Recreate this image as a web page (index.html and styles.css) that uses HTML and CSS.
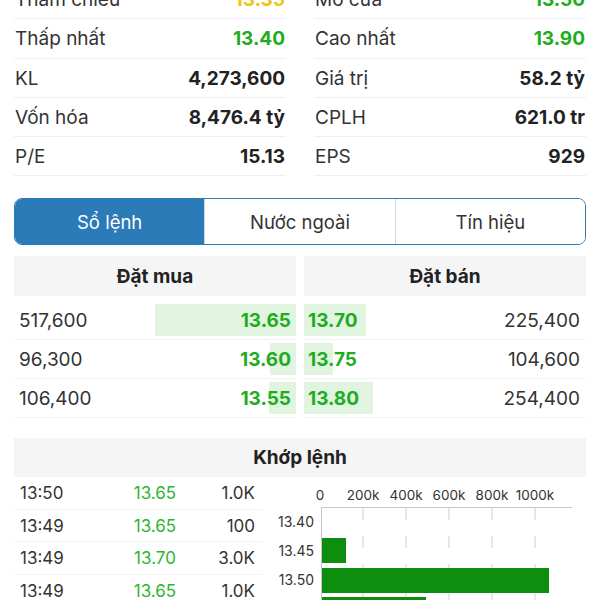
FILE: index.html
```html
<!DOCTYPE html>
<html lang="vi">
<head>
    <meta charset="UTF-8">
    <meta name="viewport" content="width=device-width, initial-scale=1.0">
    <title>Cổ phiếu</title>
    <link rel="stylesheet" href="styles.css">
</head>
<body>
    <div class="page">
        <div class="stats">
            <div class="stat"><span class="stat-label">Tham chiếu</span><span class="stat-value ref">13.35</span></div>
            <div class="stat"><span class="stat-label">Mở cửa</span><span class="stat-value up">13.50</span></div>
            <div class="stat"><span class="stat-label">Thấp nhất</span><span class="stat-value up">13.40</span></div>
            <div class="stat"><span class="stat-label">Cao nhất</span><span class="stat-value up">13.90</span></div>
            <div class="stat"><span class="stat-label">KL</span><span class="stat-value">4,273,600</span></div>
            <div class="stat"><span class="stat-label">Giá trị</span><span class="stat-value">58.2 tỷ</span></div>
            <div class="stat"><span class="stat-label">Vốn hóa</span><span class="stat-value">8,476.4 tỷ</span></div>
            <div class="stat"><span class="stat-label">CPLH</span><span class="stat-value">621.0 tr</span></div>
            <div class="stat"><span class="stat-label">P/E</span><span class="stat-value">15.13</span></div>
            <div class="stat"><span class="stat-label">EPS</span><span class="stat-value">929</span></div>
        </div>

        <div class="segmented">
            <button class="seg active">Sổ lệnh</button>
            <button class="seg">Nước ngoài</button>
            <button class="seg">Tín hiệu</button>
        </div>

        <div class="book">
            <div class="book-side buy">
                <div class="book-head">Đặt mua</div>
                <div class="book-row"><span class="bar" style="width: 141px"></span><span class="qty">517,600</span><span class="price">13.65</span></div>
                <div class="book-row"><span class="bar" style="width: 26px"></span><span class="qty">96,300</span><span class="price">13.60</span></div>
                <div class="book-row"><span class="bar" style="width: 27px"></span><span class="qty">106,400</span><span class="price">13.55</span></div>
            </div>
            <div class="book-side sell">
                <div class="book-head">Đặt bán</div>
                <div class="book-row"><span class="bar" style="width: 62px"></span><span class="price">13.70</span><span class="qty">225,400</span></div>
                <div class="book-row"><span class="bar" style="width: 29px"></span><span class="price">13.75</span><span class="qty">104,600</span></div>
                <div class="book-row"><span class="bar" style="width: 69px"></span><span class="price">13.80</span><span class="qty">254,400</span></div>
            </div>
        </div>

        <div class="matches">
            <div class="matches-head">Khớp lệnh</div>
            <div class="matches-body">
                <div class="trades">
                    <div class="trade"><span class="t-time">13:50</span><span class="t-price">13.65</span><span class="t-vol">1.0K</span></div>
                    <div class="trade"><span class="t-time">13:49</span><span class="t-price">13.65</span><span class="t-vol">100</span></div>
                    <div class="trade"><span class="t-time">13:49</span><span class="t-price">13.70</span><span class="t-vol">3.0K</span></div>
                    <div class="trade"><span class="t-time">13:49</span><span class="t-price">13.65</span><span class="t-vol">1.0K</span></div>
                </div>
                <svg class="chart" width="324" height="130" viewBox="0 0 324 130">
                    <g class="axis-x">
                        <text x="58" y="23">0</text>
                        <text x="101" y="23">200k</text>
                        <text x="144" y="23">400k</text>
                        <text x="187" y="23">600k</text>
                        <text x="230" y="23">800k</text>
                        <text x="273" y="23">1000k</text>
                    </g>
                    <g class="grid">
                        <line x1="101" y1="31" x2="101" y2="130"/>
                        <line x1="144" y1="31" x2="144" y2="130"/>
                        <line x1="187" y1="31" x2="187" y2="130"/>
                        <line x1="230" y1="31" x2="230" y2="130"/>
                        <line x1="273" y1="31" x2="273" y2="130"/>
                    </g>
                    <line class="axis-line" x1="59" y1="30.5" x2="310" y2="30.5"/>
                    <line class="axis-line" x1="59.5" y1="30" x2="59.5" y2="130"/>
                    <g class="bars">
                        <rect x="60" y="61" width="24" height="25"/>
                        <rect x="60" y="91" width="227" height="25"/>
                        <rect x="60" y="120" width="104" height="25"/>
                    </g>
                    <g class="axis-y">
                        <text x="52" y="50">13.40</text>
                        <text x="52" y="79">13.45</text>
                        <text x="52" y="108">13.50</text>
                    </g>
                </svg>
            </div>
        </div>
    </div>
</body>
</html>
```

FILE: styles.css
```css
* {
    margin: 0;
    padding: 0;
    box-sizing: border-box;
}

body {
    font-family: Inter, Roboto, "Noto Sans", sans-serif;
    background: white;
    color: #333;
    height: 600px;
    overflow: hidden;
}

.page {
    padding: 0 14px;
    margin-top: -20px;
}

/* thông tin giá */
.stats {
    display: grid;
    grid-template-columns: 1fr 1fr;
    column-gap: 28px;
}

.stat {
    height: 39.25px;
    display: flex;
    align-items: center;
    justify-content: space-between;
    border-bottom: 1px solid #efefef;
    padding: 1px 1px 0;
    font-size: 19px;
}

.stat-label {
    color: #333;
}

.stat-value {
    font-weight: 700;
    color: #222;
}

.stat-value.up {
    color: #1fac1f;
}

.stat-value.ref {
    color: #f2c318;
}

/* tab */
.segmented {
    display: flex;
    margin-top: 22px;
    height: 47px;
    border: 1.5px solid #2b7bb9;
    border-radius: 8px;
    overflow: hidden;
}

.seg {
    flex: 1;
    border: none;
    border-left: 1px solid #cfd8df;
    background: white;
    color: #333;
    font-family: inherit;
    font-size: 18.5px;
}

.seg:first-child {
    border-left: none;
}

.seg.active {
    background: #2b7bb9;
    color: white;
}

/* sổ lệnh */
.book {
    display: flex;
    gap: 8px;
    margin-top: 11px;
}

.book-side {
    flex: 1;
}

.book-head {
    height: 40px;
    margin-bottom: 5px;
    background: #f5f5f5;
    display: flex;
    align-items: center;
    justify-content: center;
    font-size: 19px;
    font-weight: 700;
    color: #222;
}

.book-row {
    position: relative;
    height: 39px;
    display: flex;
    align-items: center;
    justify-content: space-between;
    border-bottom: 1px solid #f2f2f2;
    font-size: 19px;
}

.buy .book-row {
    padding: 0 5px 0 5px;
}

.sell .book-row {
    padding: 0 6px 0 4px;
}

.book-row .bar {
    position: absolute;
    top: 3px;
    bottom: 3px;
    background: #e0f4e0;
}

.buy .bar {
    right: 0;
}

.sell .bar {
    left: 0;
}

.qty {
    position: relative;
    color: #333;
}

.price {
    position: relative;
    font-weight: 700;
    color: #1fac1f;
}

/* khớp lệnh */
.matches {
    margin-top: 20px;
}

.matches-head {
    height: 39px;
    background: #f5f5f5;
    display: flex;
    align-items: center;
    justify-content: center;
    font-size: 19px;
    font-weight: 700;
    color: #222;
}

.matches-body {
    display: flex;
}

.trades {
    width: 248px;
}

.trade {
    height: 32.5px;
    display: grid;
    grid-template-columns: 100px 70px 1fr;
    align-items: center;
    padding: 0 7px 0 6px;
    border-bottom: 1px solid #f2f2f2;
    font-size: 17px;
    color: #333;
}

.t-price {
    text-align: center;
    color: #2eb52e;
}

.t-vol {
    text-align: right;
}

.chart {
    display: block;
    font-family: Inter, sans-serif;
    font-size: 13.5px;
}

.axis-x text {
    fill: #333;
    text-anchor: middle;
}

.axis-y text {
    fill: #333;
    text-anchor: end;
    font-size: 14px;
}

.axis-line {
    stroke: #c8c8c8;
    stroke-width: 1;
}

.grid line {
    stroke: #cfcfcf;
    stroke-width: 1;
    stroke-dasharray: 12 16;
}

.bars rect {
    fill: #0e8e0e;
}
```
